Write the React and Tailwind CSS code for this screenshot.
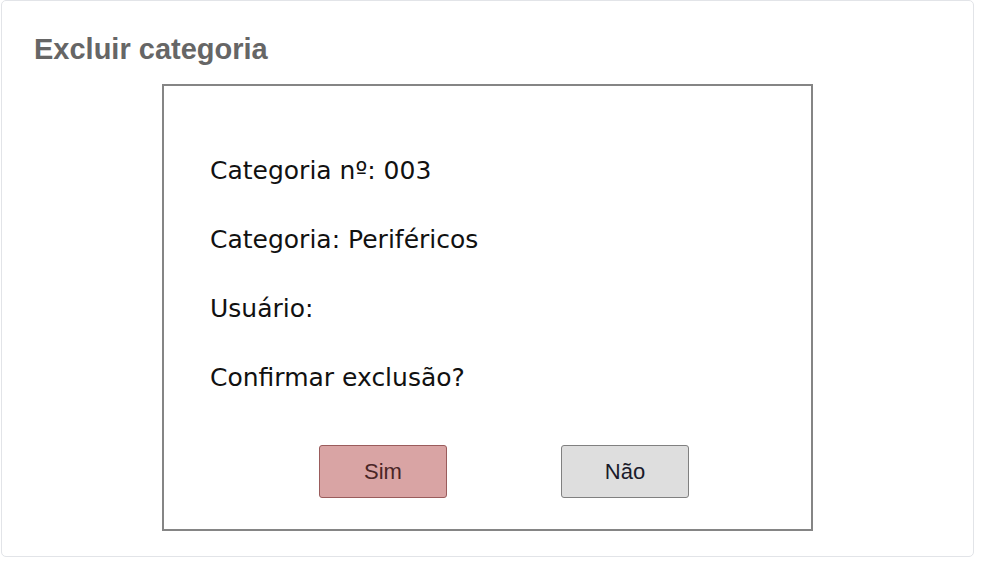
import React from 'react';

const fields = [
  'Categoria nº: 003',
  'Categoria: Periféricos',
  'Usuário:',
  'Confirmar exclusão?',
];

export default function App() {
  return (
    <div className="w-[985px] h-[564px] bg-white pl-px">
      <div className="w-[973px] h-[557px] border border-[#e2e4e8] rounded-[5px] bg-white">
        <h2 className="pl-[32px] pt-[31px] h-[83px] text-[29px] leading-[34px] font-bold text-[#666666] [font-family:'Liberation_Sans',Arial,sans-serif]">
          Excluir categoria
        </h2>
        <div className="ml-[160px] w-[651px] h-[447px] border-2 border-[#858585] flex flex-col">
          <div className="pt-[70px] pl-[46px] flex flex-col gap-[39px] [font-family:'DejaVu_Sans','Noto_Sans',sans-serif] text-[25px] leading-[30px] text-[#111111]">
            {fields.map(f => (
              <div key={f}>{f}</div>
            ))}
          </div>
          <div className="flex pl-[155px] gap-[114px] mt-[52px] [font-family:'Liberation_Sans',Arial,sans-serif] text-[22px]">
            <button className="w-[128px] h-[53px] rounded-[3px] bg-[#d9a4a4] border-[1.5px] border-[#9a5c5c] text-[#4a2626]">
              Sim
            </button>
            <button className="w-[128px] h-[53px] rounded-[3px] bg-[#dedede] border-[1.5px] border-[#808080] text-[#1a1a2a]">
              Não
            </button>
          </div>
        </div>
      </div>
    </div>
  );
}
